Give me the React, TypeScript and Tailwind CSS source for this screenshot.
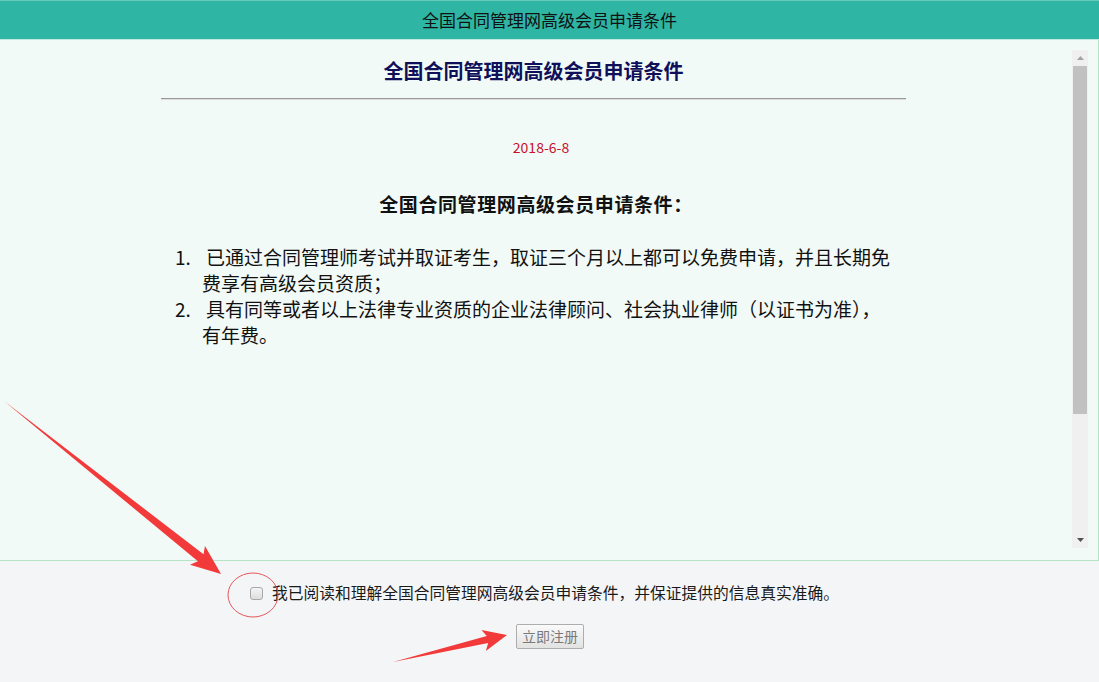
import React from "react";

const font = "font-['Noto_Sans_CJK_SC','Noto_Sans',sans-serif]";

function Scrollbar() {
  return (
    <div className="w-[16px] flex flex-col bg-[#f0f0f0]">
      <div className="h-[16px] flex items-center justify-center">
        <svg width="7" height="4" viewBox="0 0 7 4">
          <path d="M0 4 L3.5 0 L7 4 Z" fill="#a3a3a3" />
        </svg>
      </div>
      <div className="h-[348px] mx-[1px] bg-[#c1c1c1]" />
      <div className="flex-1" />
      <div className="h-[16px] flex items-center justify-center">
        <svg width="7" height="4" viewBox="0 0 7 4">
          <path d="M0 0 L7 0 L3.5 4 Z" fill="#505050" />
        </svg>
      </div>
    </div>
  );
}

const items = [
  "已通过合同管理师考试并取证考生，取证三个月以上都可以免费申请，并且长期免费享有高级会员资质；",
  "具有同等或者以上法律专业资质的企业法律顾问、社会执业律师（以证书为准），有年费。",
];

function Annotations() {
  return (
    <svg
      className="absolute inset-0 pointer-events-none"
      width="1099"
      height="682"
      viewBox="0 0 1099 682"
    >
      <polygon
        points="4,401 197.9,561.3 190,564.7 221,574 205,545.9 203.5,554.3"
        fill="#f23a3a"
      />
      <polygon
        points="393,662 488.2,643 485.8,651 507,635 481.4,630 486.8,636"
        fill="#f23a3a"
      />
      <ellipse
        cx="253"
        cy="595"
        rx="25"
        ry="22"
        fill="none"
        stroke="#e4575c"
        strokeWidth="1"
      />
    </svg>
  );
}

export default function App() {
  return (
    <div className={`relative w-[1099px] h-[682px] overflow-hidden bg-[#f4f5f7] flex flex-col ${font}`}>
      <div className="h-[40px] shrink-0 bg-[#2eb5a4] border-t border-[#66cabb] border-b border-b-[#bfe9dd] flex items-center justify-center text-[17px] text-[#111]">
        全国合同管理网高级会员申请条件
      </div>

      <div className="h-[521px] shrink-0 bg-[#f1faf6] border-r border-b border-[#b6e4c6] flex pt-[10px] pb-[12px] pl-[10px] pr-[10px]">
        <div className="flex-1 flex flex-col">
          <div className="ml-[151px] w-[745px] flex flex-col">
            <h1 className="mt-[6px] text-center text-[20px] leading-[30px] font-bold text-[#10105a]">
              全国合同管理网高级会员申请条件
            </h1>
            <div className="mt-[12px] h-[2px] border-t border-[#9a9a9a] border-b border-b-[#dcdcdc]" />
          </div>
          <p className="mt-[37px] text-center text-[14px] leading-[20px] text-[#c8102e]">
            2018-6-8
          </p>
          <h2 className="mt-[33px] pr-[10px] text-center text-[19px] leading-[28px] font-bold text-[#111] tracking-[0.6px]">
            全国合同管理网高级会员申请条件：
          </h2>
          <ol className="mt-[26px] ml-[165px] flex flex-col text-[19px] leading-[26px] text-[#111]">
            {items.map((t, i) => (
              <li key={i} className="flex">
                <span className="w-[27px] shrink-0">{i + 1}.</span>
                <span className="w-[690px] indent-[4px]">{t}</span>
              </li>
            ))}
          </ol>
        </div>
        <Scrollbar />
      </div>

      <div className="flex flex-col items-center">
        <label className="mt-[22px] pr-[10px] h-[20px] flex items-center gap-[9px] text-[15.75px] text-[#1a1a1a]">
          <span className="w-[13px] h-[13px] rounded-[3px] border border-[#a8a8a8] bg-gradient-to-b from-[#f4f4f4] to-[#dedede]" />
          <span>我已阅读和理解全国合同管理网高级会员申请条件，并保证提供的信息真实准确。</span>
        </label>
        <button className="mt-[21px] ml-[1px] w-[68px] h-[25px] rounded-[2px] border border-[#adadad] bg-gradient-to-b from-[#fafafa] to-[#e2e2e2] text-[14px] leading-[23px] text-[#7a7a7a]">
          立即注册
        </button>
      </div>

      <Annotations />
    </div>
  );
}
